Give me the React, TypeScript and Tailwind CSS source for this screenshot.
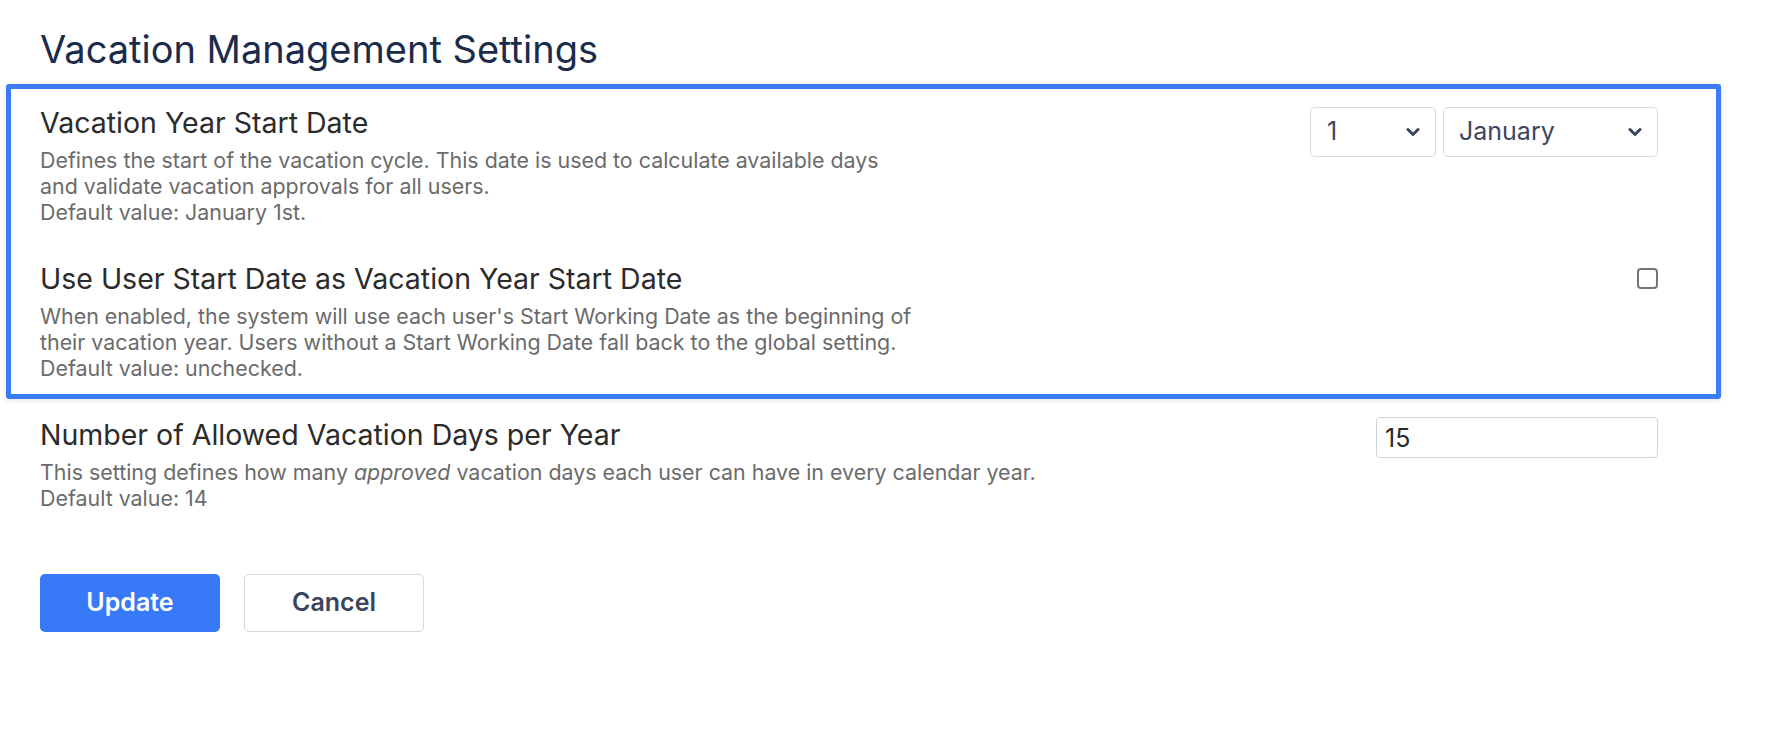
import { useState } from "react";

const months = [
  "January",
  "February",
  "March",
  "April",
  "May",
  "June",
  "July",
  "August",
  "September",
  "October",
  "November",
  "December",
];

function Chevron() {
  return (
    <svg width="14" height="10" viewBox="0 0 14 10" className="pointer-events-none absolute right-[16px] top-1/2 -translate-y-1/2">
      <path d="M2 2.5l5 5 5-5" fill="none" stroke="#3a4560" strokeWidth="3" strokeLinecap="round" strokeLinejoin="round" />
    </svg>
  );
}

function Setting({ title, lines, control }: { title: string; lines: React.ReactNode[]; control: React.ReactNode }) {
  return (
    <div className="flex items-start justify-between">
      <div>
        <h2 className="text-[28.5px] leading-[32px] text-[#2b2b2b]">{title}</h2>
        <div className="mt-[8px] text-[21.4px] leading-[26px] text-[#6b6b6b]">
          {lines.map((line, i) => (
            <p key={i} className="whitespace-nowrap">
              {line}
            </p>
          ))}
        </div>
      </div>
      {control}
    </div>
  );
}

export default function App() {
  const [day, setDay] = useState("1");
  const [month, setMonth] = useState("January");
  const [useUserStart, setUseUserStart] = useState(false);
  const [days, setDays] = useState("15");

  return (
    <main className="min-h-screen bg-white font-['Inter',sans-serif]">
      <div className="ml-[6px] w-[1715px] pt-[26px]">
        <h1 className="pl-[34px] text-[38px] leading-[46px] text-[#1c2b4b]">Vacation Management Settings</h1>

        <section className="mt-[12px] rounded-[3px] border-[5px] border-[#3b7cf6] pb-[13px] pl-[29px] pr-[58px] pt-[18px] shadow-[0_1px_6px_rgba(0,0,0,0.12)]">
          <Setting
            title="Vacation Year Start Date"
            lines={[
              "Defines the start of the vacation cycle. This date is used to calculate available days",
              "and validate vacation approvals for all users.",
              "Default value: January 1st.",
            ]}
            control={
              <div className="flex gap-[7px]">
                <div className="relative">
                  <select
                    value={day}
                    onChange={(e) => setDay(e.target.value)}
                    className="h-[50px] w-[126px] appearance-none rounded-[5px] border border-[#d4d8df] bg-white pl-[16px] text-[25px] text-[#3a4560] outline-none"
                  >
                    {Array.from({ length: 31 }, (_, i) => (
                      <option key={i}>{i + 1}</option>
                    ))}
                  </select>
                  <Chevron />
                </div>
                <div className="relative">
                  <select
                    value={month}
                    onChange={(e) => setMonth(e.target.value)}
                    className="h-[50px] w-[215px] appearance-none rounded-[5px] border border-[#d4d8df] bg-white pl-[15px] text-[25px] text-[#3a4560] outline-none"
                  >
                    {months.map((m) => (
                      <option key={m}>{m}</option>
                    ))}
                  </select>
                  <Chevron />
                </div>
              </div>
            }
          />

          <div className="mt-[38px]">
            <Setting
              title="Use User Start Date as Vacation Year Start Date"
              lines={[
                "When enabled, the system will use each user's Start Working Date as the beginning of",
                "their vacation year. Users without a Start Working Date fall back to the global setting.",
                "Default value: unchecked.",
              ]}
              control={
                <input
                  type="checkbox"
                  checked={useUserStart}
                  onChange={(e) => setUseUserStart(e.target.checked)}
                  className="mt-[5px] h-[21px] w-[21px] appearance-none rounded-[4px] border-2 border-[#767676] bg-white checked:bg-[#3b7cf6]"
                />
              }
            />
          </div>
        </section>

        <div className="pl-[34px] pr-[63px] pt-[20px]">
          <Setting
            title="Number of Allowed Vacation Days per Year"
            lines={[
              <>
                This setting defines how many <em>approved</em> vacation days each user can have in every calendar year.
              </>,
              "Default value: 14",
            ]}
            control={
              <input
                value={days}
                onChange={(e) => setDays(e.target.value)}
                className="-mt-[2px] h-[41px] w-[282px] rounded-[4px] border border-[#d4d4d4] px-[8px] text-[25px] text-[#2b2b2b] outline-none"
              />
            }
          />

          <div className="mt-[63px] flex gap-[24px]">
            <button className="h-[58px] w-[180px] rounded-[5px] bg-[#3779f6] text-[25px] font-semibold text-white">Update</button>
            <button className="h-[58px] w-[180px] rounded-[5px] border border-[#d4d8df] bg-white text-[25px] font-semibold text-[#3a4560]">
              Cancel
            </button>
          </div>
        </div>
      </div>
    </main>
  );
}
